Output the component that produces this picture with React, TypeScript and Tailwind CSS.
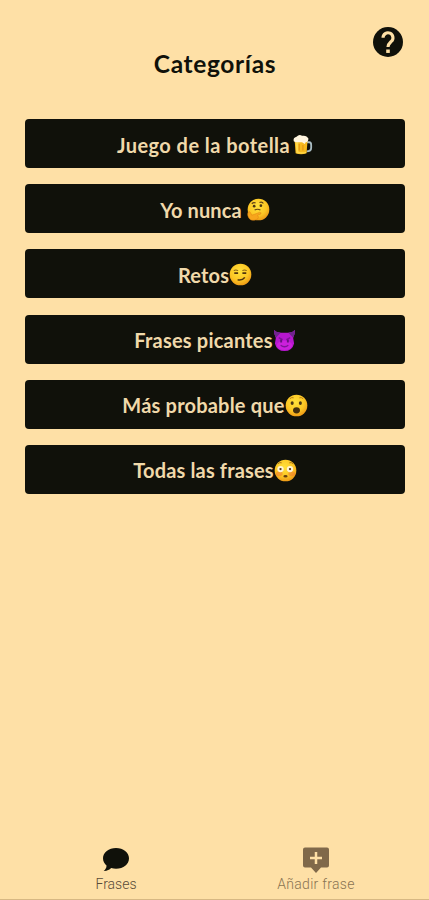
import type { ReactNode } from "react";

function Beer() {
  return (
    <svg viewBox="0 0 24 24" className="size-[22px] shrink-0">
      <path d="M17 9h3q2 0 2 3v3q0 4-5 4" fill="none" stroke="#a9bcc2" strokeWidth="2" />
      <path d="M4 7h14l-1 14q-6 2-12 0z" fill="#f6b91d" />
      <path d="M5 9l1 12q6 1 10 0l1-2q-5 2-9 0V9z" fill="#ffd94a" />
      <path d="M9 11v7M13 12v6" stroke="#e79b13" strokeWidth="1.5" />
      <path d="M3 8q-1-4 3-5 3-3 6-1 5-1 7 3 0 4-3 4l-1 2-3-2H5z" fill="#fff5df" />
    </svg>
  );
}

function Face({ children }: { children: ReactNode }) {
  return (
    <svg viewBox="0 0 24 24" className="size-[23px] shrink-0">
      <defs>
        <radialGradient id="skin" cx="45%" cy="35%" r="65%">
          <stop offset="0" stopColor="#ffe13b" />
          <stop offset=".65" stopColor="#fcc624" />
          <stop offset="1" stopColor="#ee9b16" />
        </radialGradient>
      </defs>
      <circle cx="12" cy="12" r="11.3" fill="url(#skin)" />
      {children}
    </svg>
  );
}

function Thinking() {
  return (
    <Face>
      <circle cx="7.5" cy="8.5" r="1.4" fill="#4b3514" />
      <circle cx="14.5" cy="8" r="1.4" fill="#4b3514" />
      <path d="M5 6q2-2 4-.7M13 4.7q3-1 4 1M8 12.5q3-1.6 6 0" fill="none" stroke="#604015" strokeWidth="1.2" />
      <path d="M1 15q2-2 3 1l1 2 8-3q3 0 1 2l-3 1q2 2 0 4-6 3-9-1-2-3-1-6z" fill="#f7a51c" stroke="#dd8313" strokeWidth=".5" />
    </Face>
  );
}

function Smirk() {
  return (
    <Face>
      <path d="M5 8q2-1.5 4.5 0M14 8q2-1.5 4.5 0" fill="none" stroke="#8a6217" strokeWidth="1.1" />
      <path d="M5.5 10.5h4M14 10.5h4M9 17.5q5 1 7.5-2.5" fill="none" stroke="#51350e" strokeWidth="1.7" />
    </Face>
  );
}

function Devil() {
  return (
    <svg viewBox="0 0 24 24" className="size-[23px] shrink-0">
      <path d="M1 1q3 3 7 3h8q4 0 7-3 0 5-2 8l1 6q-2 8-10 8T2 15l1-6Q1 6 1 1z" fill="#b617cf" />
      <path d="M1 1q3 3 7 3L3 9Q1 6 1 1zM23 1q-3 3-7 3l5 5q2-3 2-8z" fill="#70248e" />
      <ellipse cx="12" cy="17" rx="8" ry="5" fill="#cc20dc" />
      <path d="M6 9l4 2M18 9l-4 2M8 17q4 3 8 0" fill="none" stroke="#7d1596" strokeWidth="1.4" />
      <path d="M8.5 11v3M15.5 11v3" stroke="#681080" strokeWidth="2" />
    </svg>
  );
}

function Surprised() {
  return (
    <Face>
      <ellipse cx="7.5" cy="9.5" rx="1.6" ry="2" fill="#4c3614" />
      <ellipse cx="16" cy="9.5" rx="1.6" ry="2" fill="#4c3614" />
      <path d="M5 5q2-2 4-1M15 4q2-1 4 1" fill="none" stroke="#b77a15" />
      <ellipse cx="12" cy="17" rx="3.6" ry="3.3" fill="#422d0c" />
    </Face>
  );
}

function Flushed() {
  return (
    <Face>
      <ellipse cx="5.5" cy="15.5" rx="3.5" ry="2.5" fill="#ed7131" opacity=".5" />
      <ellipse cx="18.5" cy="15.5" rx="3.5" ry="2.5" fill="#ed7131" opacity=".5" />
      <circle cx="6.8" cy="10.5" r="3.3" fill="#fff4d6" />
      <circle cx="16.7" cy="10.5" r="3.3" fill="#fff4d6" />
      <circle cx="6.8" cy="10.5" r="1.2" fill="#51371b" />
      <circle cx="16.7" cy="10.5" r="1.2" fill="#51371b" />
      <path d="M4 5q2-2 4-1M16 4q2-1 4 1" fill="none" stroke="#a46b15" />
      <ellipse cx="12" cy="18" rx="2.2" ry="1.4" fill="#68400f" />
    </Face>
  );
}

const categories = [
  { label: "Juego de la botella", icon: <Beer />, style: "gap-[1px] tracking-[0.45px]" },
  { label: "Yo nunca", icon: <Thinking />, style: "gap-[5px] tracking-[0.1px]" },
  { label: "Retos", icon: <Smirk />, style: "gap-0 tracking-[0.15px]" },
  { label: "Frases picantes", icon: <Devil />, style: "gap-0 tracking-[0.2px]" },
  { label: "Más probable que", icon: <Surprised />, style: "gap-0 tracking-[0.2px]" },
  { label: "Todas las frases", icon: <Flushed />, style: "gap-0 tracking-[0.15px]" },
];

export default function App() {
  return (
    <div className="flex h-[900px] w-full flex-col overflow-hidden border-b border-[#d7b883] bg-[#fee0a6] font-[Lato,sans-serif] text-[#10110a]">
      <header className="grid h-[119px] shrink-0 grid-cols-[1fr_auto_1fr] items-start">
        <h1 className="col-start-2 mt-[48px] ml-[1px] text-[24.5px] leading-[32px] font-bold tracking-[0.65px]">Categorías</h1>
        <button aria-label="Ayuda" className="mt-[23.5px] mr-[23px] justify-self-end">
          <svg viewBox="0 0 24 24" className="size-[36px]">
            <circle cx="12" cy="12" r="10" fill="currentColor" />
            <path d="M8.7 9.2a3.3 3.3 0 1 1 5.5 2.4C12.8 12.9 12 13.4 12 15.4" fill="none" stroke="#fee0a6" strokeWidth="2.1" />
            <path d="M10.8 17h2.4v2.3h-2.4z" fill="#fee0a6" />
          </svg>
        </button>
      </header>
      <main className="flex flex-1 flex-col gap-[16.2px] pr-[24px] pl-[25px]">
        {categories.map(({ label, icon, style }) => (
          <button key={label} className={`flex h-[49px] shrink-0 items-center justify-center rounded-[4px] bg-[#10110a] pt-[2px] text-[20px] leading-6 font-bold text-[#f0d9aa] ${style}`}>
            <span>{label}</span>
            {icon}
          </button>
        ))}
      </main>
      <nav className="flex h-[65px] shrink-0 pr-[13px] pl-[16px] font-[Roboto,sans-serif] text-[14px] leading-4">
        <button className="flex flex-1 flex-col items-center pt-[13px] text-[#594b38]">
          <svg viewBox="0 0 28 26" className="h-[26px] w-[28px] text-[#10110a]">
            <path d="M14 1C6.8 1 1 5.8 1 11.3c0 3 1.4 5.4 3.5 7.2.2 2.3-1.2 4.2-2.8 5.5 3 .2 5.9-1.2 7.4-2.9 9.8 2.4 17.9-2.5 17.9-9.8C27 5.8 21.2 1 14 1z" fill="currentColor" />
          </svg>
          <span className="mt-[3px] font-light">Frases</span>
        </button>
        <button className="flex flex-1 flex-col items-center pt-[13px] text-[#8a7452]">
          <svg viewBox="0 0 28 26" className="h-[26px] w-[28px] text-[#80694a]">
            <path d="M3 .5h22q2 0 2 2v16q0 2-2 2h-6L14 26l-5-5.5H3q-2 0-2-2v-16q0-2 2-2z" fill="currentColor" />
            <path d="M14 5v12M8 11h12" stroke="#fee0a6" strokeWidth="2.5" />
          </svg>
          <span className="mt-[3px] font-light tracking-[0.3px]">Añadir frase</span>
        </button>
      </nav>
    </div>
  );
}
